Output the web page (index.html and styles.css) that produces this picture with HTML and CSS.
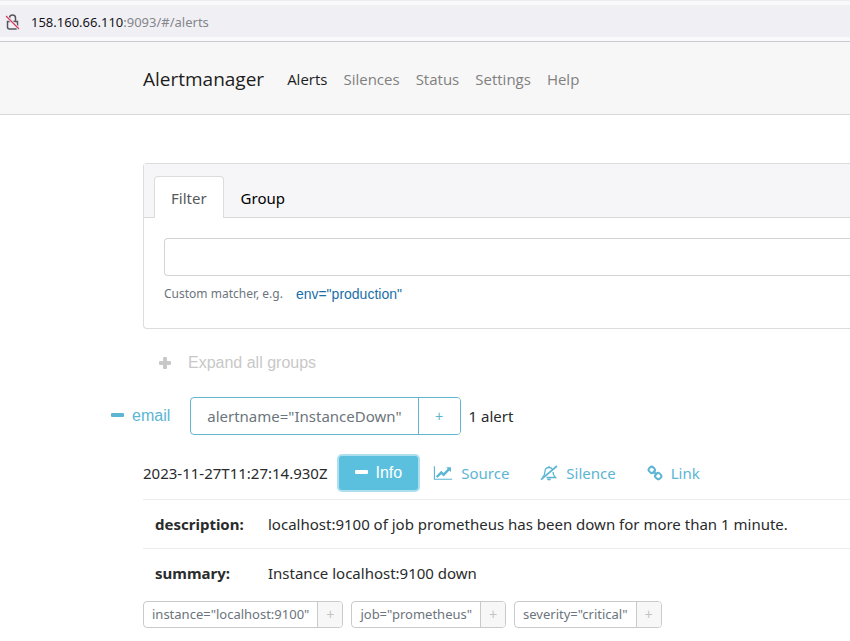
FILE: index.html
```html
<!DOCTYPE html>
<html lang="en">
<head>
<meta charset="utf-8">
<title>Alertmanager</title>
<link rel="stylesheet" href="styles.css">
</head>
<body>
<div class="browser-bar">
  <div class="address">
    <svg class="lock" viewBox="0 0 16 18" aria-hidden="true"><path d="M2.5 8.5h10v5.500a2 2 0 0 1-2 2h-6a2 2 0 0 1-2-2zM4.500 8V5a3 3 0 0 1 6 0v3" fill="none" stroke="#55555d" stroke-width="1.500"/><path d="M1 3l13 13" stroke="#f0f0f4" stroke-width="3"/><path d="M1 3l13 13" stroke="#d9385e" stroke-width="1.300"/></svg>
    <span class="url"><span class="host">158.160.66.110</span>:9093/#/alerts</span>
  </div>
</div>
<header class="navbar">
  <a class="brand" href="#">Alertmanager</a>
  <nav class="nav">
    <a class="active" href="#/alerts">Alerts</a>
    <a href="#/silences">Silences</a>
    <a href="#/status">Status</a>
    <a href="#/settings">Settings</a>
    <a href="#/help">Help</a>
  </nav>
</header>
<main class="content">
  <section class="card">
    <div class="tabs">
      <a class="tab selected" href="#filter">Filter</a>
      <a class="tab" href="#group">Group</a>
    </div>
    <div class="card-body">
      <input class="matcher" id="matcher" type="text" aria-label="Matcher">
      <div class="help"><label for="matcher">Custom matcher, e.g.</label><button class="example" type="button">env="production"</button></div>
    </div>
  </section>
  <button class="expand" type="button">
    <svg class="icon" viewBox="0 0 14 14" aria-hidden="true"><path d="M5.600 1.500h2.800v4.100h4.100v2.800H8.400v4.100H5.600V8.400H1.500V5.600h4.100z" fill="currentColor" stroke="currentColor" stroke-linejoin="round"/></svg>
    Expand all groups
  </button>
  <section class="group">
    <button class="receiver" type="button">
      <svg class="icon" viewBox="0 0 14 14" aria-hidden="true"><rect x="1" y="4" width="13" height="4" rx="1" fill="currentColor"/></svg>
      email
    </button>
    <div class="label label-lg"><span>alertname="InstanceDown"</span><button type="button" aria-label="Add alertname filter">+</button></div>
    <span class="count">1 alert</span>
  </section>
  <section class="alert">
    <div class="actions">
      <time>2023-11-27T11:27:14.930Z</time>
      <button class="info" type="button">
        <svg class="icon" viewBox="0 0 14 14" aria-hidden="true"><rect x="1" y="4" width="13" height="4" rx="1" fill="currentColor"/></svg>
        Info
      </button>
      <a class="action" href="#source">
        <svg class="chart" viewBox="0 0 2048 1792" aria-hidden="true"><path fill="currentColor" d="M2048 1536v128h-2048v-1536h128v1408h1920zm-128-1248v435q0 21-19.500 29.500t-35.500-7.500l-121-121-633 633q-10 10-23 10t-23-10l-233-233-416 416-192-192 585-585q10-10 23-10t23 10l233 233 464-464-121-121q-16-16-7.500-35.500t29.500-19.500h435q14 0 23 9t9 23z"/></svg>
        Source
      </a>
      <a class="action" href="#silence">
        <svg class="bell" viewBox="0 0 18 16" aria-hidden="true"><g fill="none" stroke="currentColor" stroke-width="1.300"><path d="M2.500 12.500C4.500 10.500 5 9 5 6.500 5 4 6.600 2.500 9 2.500c1.500 0 2.600.6 3.300 1.500M13 7c.1 2.600.8 4 2.500 5.500H6.500M9 2.500V1"/><path d="M1 14.600L17 1" stroke-width="1.700"/></g><path d="M7 13.500h4a2 2 0 0 1-4 0z" fill="currentColor"/></svg>
        Silence
      </a>
      <a class="action" href="#link">
        <svg class="chain" viewBox="0 0 16 16" aria-hidden="true"><g fill="none" stroke="currentColor" stroke-width="2"><rect x="1.800" y="2.100" width="6" height="5.600" rx="2.300" transform="rotate(45 4.800 4.900)"/><rect x="8.200" y="8.300" width="6" height="5.600" rx="2.300" transform="rotate(45 11.200 11.100)"/><path d="M6 6l4 4"/></g></svg>
        Link
      </a>
    </div>
    <table class="annotations">
      <tr><th scope="row">description:</th><td>localhost:9100 of job prometheus has been down for more than 1 minute.</td></tr>
      <tr><th scope="row">summary:</th><td>Instance localhost:9100 down</td></tr>
    </table>
    <div class="labels">
      <div class="label"><span>instance="localhost:9100"</span><button type="button" aria-label="Add instance filter">+</button></div>
      <div class="label"><span>job="prometheus"</span><button type="button" aria-label="Add job filter">+</button></div>
      <div class="label"><span>severity="critical"</span><button type="button" aria-label="Add severity filter">+</button></div>
    </div>
  </section>
</main>
</body>
</html>
```
FILE: styles.css
```css
* { box-sizing: border-box; }
body {
  margin: 0;
  background: #fff;
  color: #292b2c;
  font: 15px/24px "Noto Sans", "Open Sans", sans-serif;
  white-space: nowrap;
}
a { color: inherit; text-decoration: none; }
button { font: 16px/24px "Liberation Sans", sans-serif; border: 0; background: none; padding: 0; cursor: pointer; }
svg { flex: none; }

.browser-bar { background: #f9f9fb; border-top: 1px solid #ececf0; border-bottom: 1px solid #ccccd0; padding: 4px 0; }
.address { display: flex; align-items: center; gap: 10px; height: 32px; padding: 1px 0 0 5px; background: #f0f0f4; }
.lock { width: 16px; height: 18px; }
.url { font-size: 13px; color: #85858b; }
.host { color: #15141a; }

.navbar { display: flex; align-items: center; gap: 23px; height: 73px; padding: 2px 0 0 143px; background: #f7f7f7; border-bottom: 1px solid #d9d9d9; font-family: "Open Sans", sans-serif; }
.brand { font-size: 19px; color: #1d1d1d; }
.nav { display: flex; gap: 16px; color: #808080; }
.nav .active { color: #1d1d1d; }

.content { padding: 48px 0 12px 143px; }
.card { border: 1px solid #dcdcdd; border-right: 0; border-radius: 4px 0 0 4px; }
.tabs { display: flex; padding: 12px 10px 0; background: #f6f6f9; border-bottom: 1px solid #d9d9da; }
.tab { padding: 9px 16px 7px; border: 1px solid transparent; border-bottom: 0; color: #000; }
.tab.selected { margin-bottom: -1px; background: #fff; border-color: #dcdcdd; border-radius: 4px 4px 0 0; color: #55595c; }
.card-body { padding: 20px 0 18px 20px; }
.matcher { display: block; width: 100%; height: 38px; padding: 6px 12px; border: 1px solid #d4d4d5; border-right: 0; border-radius: 4px 0 0 4px; font: inherit; }
.help { display: flex; align-items: center; gap: 13px; height: 32px; margin: 2px 0 0; font-size: 12px; color: #6c757d; }
.example { font-size: 14px; color: #1b6fa8; }

.icon { width: 14px; height: 14px; }
.expand { display: flex; align-items: center; gap: 16px; height: 38px; margin: 15px 0 15px 15px; color: #c8c8c8; }
.group { display: flex; align-items: center; margin-left: -33px; }
.receiver { display: flex; align-items: center; gap: 8px; color: #5bb5d3; }
.label { display: flex; border: 1px solid #c8cacb; border-radius: 4px; color: #6c757d; font-size: 13px; line-height: 25px; overflow: hidden; }
.label span { padding: 0 8px; }
.label button { width: 25px; border-left: 1px solid #c8cacb; background: #f7f7f7; color: #c4c4c4; font-size: 14px; }
.label-lg { margin: 0 8px 0 20px; border-color: #62b4cc; font-size: 15px; line-height: 36px; }
.label-lg span { padding: 0 16px; }
.label-lg button { width: 42px; border-color: #62b4cc; background: #fff; color: #5bb5d3; }

.alert { margin-top: 19px; }
.actions { display: flex; align-items: center; height: 38px; margin-bottom: 7px; }
.info { display: flex; align-items: center; gap: 8px; height: 34px; margin: 0 15px 0 11px; padding: 0 16px 0 15px; background: #5bc0de; color: #fff; border-radius: 3px; box-shadow: 0 0 0 2px #addfee; }
.action { display: flex; align-items: center; gap: 8px; margin-right: 31px; color: #5bb5d3; }
.chart { width: 20px; height: 16px; }
.bell { width: 18px; height: 16px; }
.chain { width: 16px; height: 16px; }

.annotations { width: 100%; border-collapse: collapse; }
.annotations th, .annotations td { height: 49px; padding: 0 12px; border-top: 1px solid #ececee; text-align: left; }
.annotations th { width: 113px; }
.annotations td { padding-right: 0; }
.labels { display: flex; gap: 8px; margin-top: 3px; }
```
